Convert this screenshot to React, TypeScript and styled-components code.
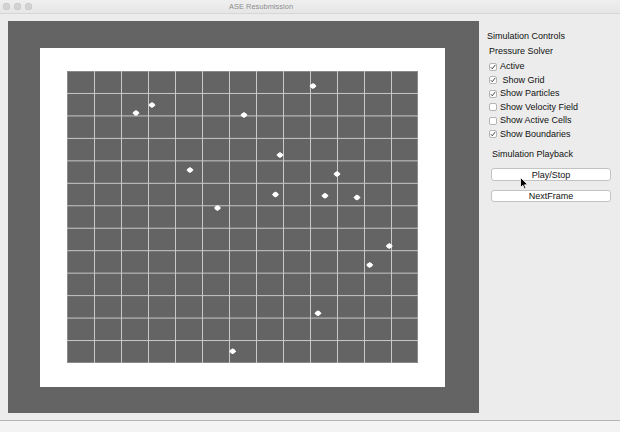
import React from "react";
import styled, { createGlobalStyle } from "styled-components";

const GlobalStyle = createGlobalStyle`
  html, body { margin: 0; padding: 0; background: #ececec; }
  body {
    font-family: "Liberation Sans", Arial, Helvetica, sans-serif;
    -webkit-font-smoothing: antialiased;
  }
  #root { width: 620px; height: 432px; overflow: hidden; }
`;

const Window = styled.div`
  position: relative;
  width: 620px;
  height: 432px;
  display: flex;
  flex-direction: column;
  background: #ececec;
  overflow: hidden;
`;

const TitleBar = styled.div`
  flex: none;
  height: 13px;
  display: flex;
  align-items: center;
  padding-left: 3px;
  background: linear-gradient(#efefef, #e6e6e6);
  border-bottom: 1px solid #d6d6d6;
`;

const Lights = styled.div`
  display: flex;
  gap: 4px;
`;

const Light = styled.span`
  width: 7px;
  height: 7px;
  border-radius: 50%;
  background: #d3d3d3;
  box-shadow: inset 0 0 0 0.5px #c2c2c2;
`;

const Title = styled.div`
  margin-left: 197px;
  font-size: 7.4px;
  color: #8c8c8c;
  letter-spacing: 0.05px;
`;

const Main = styled.div`
  flex: 1;
  display: flex;
  align-items: flex-start;
  padding: 7px 0 0 8px;
`;

const Canvas = styled.div`
  flex: none;
  width: 471px;
  height: 392px;
  box-sizing: border-box;
  background: #646464;
  padding: 27px 34px 26px 32px;
`;

const Frame = styled.div`
  width: 405px;
  height: 339px;
  box-sizing: border-box;
  background: #ffffff;
  padding: 23px 27px 24px 27px;
`;

const GridArea = styled.div`
  width: 351px;
  height: 292px;
  background: #646464;
`;

const Panel = styled.div`
  flex: 1;
  display: flex;
  flex-direction: column;
  padding: 10px 0 0 8px;
  font-size: 9px;
  color: #111;
`;

const PanelTitle = styled.div`
  line-height: 11px;
`;

const SectionLabel = styled.div<{ $indent: number; $gap: number }>`
  line-height: 11px;
  margin-left: ${(p) => p.$indent}px;
  margin-top: ${(p) => p.$gap}px;
`;

const CheckList = styled.div`
  margin-top: 2.5px;
  margin-left: 2px;
  display: flex;
  flex-direction: column;
`;

const CheckRow = styled.div`
  height: 13.5px;
  display: flex;
  align-items: center;
  gap: 3px;
`;

const Box = styled.span`
  width: 8px;
  height: 8px;
  box-sizing: border-box;
  border: 1px solid #b4b4b4;
  border-radius: 2px;
  background: #fff;
  display: flex;
  align-items: center;
  justify-content: center;
`;

const CheckLabel = styled.span`
  line-height: 11px;
  white-space: pre;
`;

const Button = styled.div<{ $gap: number }>`
  margin-left: 4px;
  margin-top: ${(p) => p.$gap}px;
  width: 120px;
  height: 12.5px;
  box-sizing: border-box;
  border: 1px solid #c3c3c3;
  border-radius: 3px;
  background: #ffffff;
  display: flex;
  align-items: center;
  justify-content: center;
  font-size: 9px;
  line-height: 10px;
`;

const Footer = styled.div`
  flex: none;
  height: 11px;
  border-top: 1px solid #b5b5b5;
  background: #f3f3f3;
`;

const Cursor = styled.svg`
  position: absolute;
  left: 520px;
  top: 177px;
`;

const particles: [number, number][] = [
  [246, 15], [85, 34], [69, 42], [177, 44], [213, 84], [123, 99],
  [270, 103], [208.5, 123.5], [258, 124.7], [290, 126.5], [150.5, 137],
  [322.3, 175], [302.7, 194], [251, 242.3], [165.7, 280.3],
];

const CELL_W = 27;
const CELL_H = 292 / 13;

const GridDrawing = () => (
  <svg width={351} height={292} style={{ display: "block" }}>
    <rect x={0.5} y={0.5} width={350} height={291} fill="none" stroke="#8a8a8a" strokeWidth={1} />
    {Array.from({ length: 12 }, (_, i) => (
      <line key={"v" + i} x1={(i + 1) * CELL_W + 0.5} y1={0} x2={(i + 1) * CELL_W + 0.5} y2={292} stroke="#c8c8c8" strokeWidth={1} />
    ))}
    {Array.from({ length: 12 }, (_, i) => (
      <line key={"h" + i} x1={0} y1={(i + 1) * CELL_H} x2={351} y2={(i + 1) * CELL_H} stroke="#c8c8c8" strokeWidth={1} />
    ))}
    {particles.map(([x, y], i) => (
      <g key={"p" + i} fill="#ffffff">
        <polygon points={`${x - 3.6},${y} ${x},${y - 3} ${x + 3.6},${y} ${x},${y + 3}`} />
        <ellipse cx={x} cy={y} rx={2.6} ry={2.3} />
      </g>
    ))}
  </svg>
);

const Check = () => (
  <svg width={6} height={6} viewBox="0 0 6 6">
    <path d="M0.8 3.2 L2.3 4.8 L5.2 0.9" fill="none" stroke="#333" strokeWidth={0.9} />
  </svg>
);

const options: [string, boolean][] = [
  ["Active", true],
  [" Show Grid", true],
  ["Show Particles", true],
  ["Show Velocity Field", false],
  ["Show Active Cells", false],
  ["Show Boundaries", true],
];

export default function App() {
  return (
    <>
      <GlobalStyle />
      <Window>
        <TitleBar>
          <Lights>
            <Light />
            <Light />
            <Light />
          </Lights>
          <Title>ASE Resubmission</Title>
        </TitleBar>
        <Main>
          <Canvas>
            <Frame>
              <GridArea>
                <GridDrawing />
              </GridArea>
            </Frame>
          </Canvas>
          <Panel>
            <PanelTitle>Simulation Controls</PanelTitle>
            <SectionLabel $indent={2} $gap={4.3}>Pressure Solver</SectionLabel>
            <CheckList>
              {options.map(([label, on]) => (
                <CheckRow key={label}>
                  <Box>{on && <Check />}</Box>
                  <CheckLabel>{label}</CheckLabel>
                </CheckRow>
              ))}
            </CheckList>
            <SectionLabel $indent={5} $gap={8.7}>Simulation Playback</SectionLabel>
            <Button $gap={8}>Play/Stop</Button>
            <Button $gap={8.7}>NextFrame</Button>
          </Panel>
        </Main>
        <Footer />
        <Cursor width={9} height={13} viewBox="0 0 9 13">
          <path d="M0.5 0.5 L0.5 10.5 L2.9 8.3 L4.5 12 L6 11.4 L4.5 7.8 L7.8 7.8 Z" fill="#000" stroke="#fff" strokeWidth={0.8} />
        </Cursor>
      </Window>
    </>
  );
}
